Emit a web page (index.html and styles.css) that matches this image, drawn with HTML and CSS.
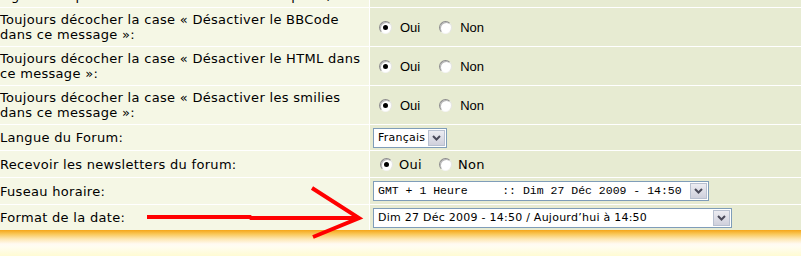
FILE: index.html
```html
<!DOCTYPE html>
<html lang="fr">

<head>
    <meta charset="UTF-8">
    <meta name="viewport" content="width=device-width, initial-scale=1.0">
    <title>Préférences du profil</title>
    <link rel="stylesheet" href="styles.css">
</head>

<body>
    <div class="page">
        <!-- tableau des préférences -->
        <div class="prefs">
            <div class="label first">signatures peuvent être modifiées dans le profil) :</div>
            <div class="field"></div>

            <div class="label">Toujours décocher la case « Désactiver le BBCode<br>dans ce message »:</div>
            <div class="field">
                <span class="radio on"></span><span class="opt">Oui</span>
                <span class="radio"></span><span class="opt">Non</span>
            </div>

            <div class="label">Toujours décocher la case « Désactiver le HTML dans<br>ce message »:</div>
            <div class="field">
                <span class="radio on"></span><span class="opt">Oui</span>
                <span class="radio"></span><span class="opt">Non</span>
            </div>

            <div class="label">Toujours décocher la case « Désactiver les smilies<br>dans ce message »:</div>
            <div class="field">
                <span class="radio on"></span><span class="opt">Oui</span>
                <span class="radio"></span><span class="opt">Non</span>
            </div>

            <div class="label">Langue du Forum:</div>
            <div class="field">
                <div class="select lang">
                    <span class="select-text">Français</span>
                    <span class="select-btn"><svg width="9" height="6" viewBox="0 0 9 6"><path d="M1 1 L4.5 4.5 L8 1" fill="none" stroke="#4a4a5a" stroke-width="2"/></svg></span>
                </div>
            </div>

            <div class="label">Recevoir les newsletters du forum:</div>
            <div class="field news">
                <span class="radio on"></span><span class="opt">Oui</span>
                <span class="radio"></span><span class="opt">Non</span>
            </div>

            <div class="label">Fuseau horaire:</div>
            <div class="field">
                <div class="select tz">
                    <span class="select-text mono">GMT + 1 Heure     :: Dim 27 Déc 2009 - 14:50</span>
                    <span class="select-btn"><svg width="9" height="6" viewBox="0 0 9 6"><path d="M1 1 L4.5 4.5 L8 1" fill="none" stroke="#4a4a5a" stroke-width="2"/></svg></span>
                </div>
            </div>

            <div class="label">Format de la date:</div>
            <div class="field">
                <div class="select datefmt">
                    <span class="select-text">Dim 27 Déc 2009 - 14:50 / Aujourd’hui à 14:50</span>
                    <span class="select-btn"><svg width="9" height="6" viewBox="0 0 9 6"><path d="M1 1 L4.5 4.5 L8 1" fill="none" stroke="#4a4a5a" stroke-width="2"/></svg></span>
                </div>
            </div>
        </div>

        <!-- bande du bas -->
        <div class="band"></div>

        <!-- flèche rouge dessinée à la main -->
        <svg class="arrow" width="801" height="256" viewBox="0 0 801 256">
            <path d="M147 217 L250 217 L251 218 L359 218" fill="none" stroke="#f00" stroke-width="4"/>
            <path d="M312 188 L359 218 L313 237" fill="none" stroke="#f00" stroke-width="4" stroke-linejoin="miter"/>
        </svg>
    </div>
</body>

</html>
```

FILE: styles.css
```css
html,
body {
    margin: 0;
    padding: 0;
    background: #fff;
}

/* conteneur de la page */
.page {
    position: relative;
    display: flow-root;
    height: 256px;
    overflow: hidden;
}

/* tableau : 2 colonnes, filets blancs */
.prefs {
    display: grid;
    grid-template-columns: 369px 1fr;
    grid-template-rows: 29px 38px 38px 38px 25px 26px 26px 25px;
    gap: 1px;
    margin-top: -22px;
    background: #fff;
    font-family: "DejaVu Sans", Verdana, sans-serif;
    font-size: 13px;
    color: #000;
}

/* colonne des libellés */
.label {
    display: flex;
    align-items: center;
    line-height: 15px;
    letter-spacing: 0.3px;
    white-space: nowrap;
    overflow: hidden;
    background: #f5f7e5;
}

/* ligne du haut coupée */
.label.first {
    align-items: flex-end;
    padding-bottom: 4px;
}

/* colonne des champs */
.field {
    display: flex;
    align-items: center;
    padding-left: 3px;
    background: #e7ebd2;
}

/* boutons radio */
.radio {
    position: relative;
    width: 13px;
    height: 13px;
    box-sizing: border-box;
    border-radius: 50%;
    border: 1px solid;
    border-color: #8c8c8c #e4e4e4 #f4f4f4 #8c8c8c;
    background: #fff;
    box-shadow: inset 1px 1px 0 #b8b8b8;
    margin-left: 19px;
}

.radio:first-child {
    margin-left: 6px;
}

.radio.on::after {
    content: "";
    position: absolute;
    left: 3px;
    top: 3px;
    width: 5px;
    height: 5px;
    border-radius: 50%;
    background: #000;
}

.opt {
    margin-left: 8px;
    font-family: "Liberation Sans", Arial, sans-serif;
    font-size: 13px;
}

/* ligne newsletter : police verdana */
.news .radio {
    margin-left: 17px;
}

.news .radio:first-child {
    margin-left: 7px;
}

.news .opt {
    margin-left: 6px;
    font-family: "DejaVu Sans", Verdana, sans-serif;
    letter-spacing: 0.3px;
}

/* listes déroulantes */
.select {
    display: flex;
    align-items: center;
    height: 20px;
    box-sizing: border-box;
    border: 1px solid #7f9db9;
    background: #fff;
    padding: 1px;
    font-size: 11px;
}

.select-text {
    flex: 1;
    padding-left: 3px;
    white-space: pre;
    line-height: 16px;
    letter-spacing: 0.25px;
}

.select-text.mono {
    font-family: "Liberation Mono", "Courier New", monospace;
    font-size: 11.5px;
    letter-spacing: 0;
}

.select-btn {
    display: flex;
    align-items: center;
    justify-content: center;
    width: 17px;
    height: 16px;
    box-sizing: border-box;
    border: 1px solid #b8c0d0;
    background: linear-gradient(#ececf2, #cfd0dc);
}

.lang {
    width: 74px;
}

.tz {
    width: 336px;
}

.datefmt {
    width: 359px;
}

/* bande dégradée du bas */
.band {
    height: 30px;
    background: linear-gradient(#f5a519 0, #f9c758 4px, #fde7b4 9px, #fffaf2 14px, #fffdf0 17px, #fffbd2 26px);
}

/* flèche rouge posée par-dessus */
.arrow {
    position: absolute;
    top: 0;
    left: 0;
    pointer-events: none;
}
```
